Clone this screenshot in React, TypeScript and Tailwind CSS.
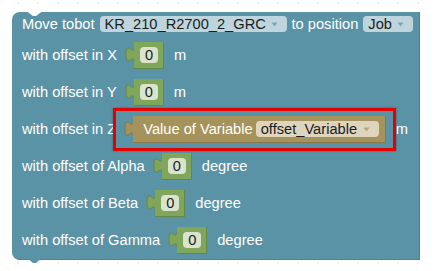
import React from "react";

function Arrow({ color }: { color: string }) {
  return (
    <svg width="7" height="5" viewBox="0 0 7 5" className="shrink-0">
      <path d="M0.5,0.5 L6.5,0.5 L3.5,4.5 Z" fill={color} />
    </svg>
  );
}

function Dropdown({
  label,
  cls,
  arrow,
}: {
  label: string;
  cls: string;
  arrow: string;
}) {
  return (
    <div
      className={`flex h-[16px] shrink-0 items-center justify-between rounded-[4px] pl-[5px] pr-[9px] text-[#1c1c1c] ${cls}`}
    >
      <span className="leading-none whitespace-nowrap">{label}</span>
      <Arrow color={arrow} />
    </div>
  );
}

function Tab({ fill, stroke }: { fill: string; stroke: string }) {
  return (
    <svg
      width="8"
      height="27"
      viewBox="0 0 8 27"
      className="shrink-0 overflow-visible"
    >
      <path
        d="M8.6,5 L8,5 c0,10 -8,-8 -8,7.5 s8,-2.5 8,7.5 L8.6,20 Z"
        fill={fill}
      />
      <path
        d="M8,5 c0,10 -8,-8 -8,7.5 s8,-2.5 8,7.5"
        fill="none"
        stroke={stroke}
        strokeWidth="1"
      />
    </svg>
  );
}

function NumBlock() {
  return (
    <div className="flex items-center">
      <Tab fill="#80a65b" stroke="#66864a" />
      <div className="flex h-[27px] w-[30px] items-center border-b border-r border-[#66864a] bg-[#80a65b] pl-[6px]">
        <div className="flex h-[16px] w-[18px] items-center justify-center rounded-[4px] bg-[#d9e4ce] leading-none text-[#1c1c1c]">
          0
        </div>
      </div>
    </div>
  );
}

function Row({
  label,
  unit,
  children,
}: {
  label: string;
  unit: string;
  children: React.ReactNode;
}) {
  return (
    <div className="flex h-[27px] items-center">
      <span className="whitespace-nowrap leading-none">{label}</span>
      <div className="ml-[9px]">{children}</div>
      <span className="ml-[10px] whitespace-nowrap leading-none">{unit}</span>
    </div>
  );
}

function Grid() {
  const dots: React.ReactNode[] = [];
  for (let i = 0; i < 21; i++) {
    for (let j = 0; j < 14; j++) {
      const x = 18 + i * 20;
      const y = 3 + j * 20;
      dots.push(
        <g key={`${i}-${j}`}>
          <rect x={x - 0.5} y={y - 0.5} width="1" height="1" fill="#c8c8c8" />
        </g>
      );
    }
  }
  return (
    <svg
      className="absolute inset-0"
      width="436"
      height="271"
      viewBox="0 0 436 271"
    >
      {dots}
    </svg>
  );
}

export default function App() {
  return (
    <div className="relative h-[271px] w-[436px] overflow-hidden bg-white font-['Liberation_Sans',Arial,sans-serif] text-[14.67px]">
      <Grid />
      <div className="relative pl-[12px] pt-[12px]">
        <div className="relative flex h-[248px] w-[408px] flex-col gap-[10px] rounded-l-[8px] border-b border-r border-[#4f8193] bg-[#5b93a6] pl-[10px] pt-[4px] text-white">
          {/* top notch */}
          <svg
            className="absolute left-[15px] top-0"
            width="15"
            height="4"
            viewBox="0 0 15 4"
          >
            <path d="M0,-0.5 L6,4 L9,4 L15,-0.5 Z" fill="#ffffff" />
          </svg>
          {/* bottom notch tab */}
          <svg
            className="absolute left-[15px] top-full"
            width="15"
            height="5"
            viewBox="0 0 15 5"
          >
            <path d="M0,-1 L6,4 L9,4 L15,-1 Z" fill="#5b93a6" />
          </svg>

          <div className="flex h-[16px] items-center">
            <span className="whitespace-nowrap leading-none">Move tobot</span>
            <Dropdown
              label="KR_210_R2700_2_GRC"
              cls="ml-[5px] w-[187px] bg-[#bfd5dd]"
              arrow="#7fa8b7"
            />
            <span className="ml-[5px] whitespace-nowrap leading-none">
              to position
            </span>
            <Dropdown
              label="Job"
              cls="ml-[5px] w-[50px] bg-[#bfd5dd]"
              arrow="#7fa8b7"
            />
          </div>

          <Row label="with offset in X" unit="m">
            <NumBlock />
          </Row>
          <Row label="with offset in Y" unit="m">
            <NumBlock />
          </Row>
          <Row label="with offset in Z" unit="m">
            <div className="relative flex items-center">
              <Tab fill="#a6935b" stroke="#87774a" />
              <div className="flex h-[27px] items-center border-b border-r border-[#87774a] bg-[#a6935b] pl-[10px] pr-[6px]">
                <span className="whitespace-nowrap leading-none">
                  Value of Variable
                </span>
                <Dropdown
                  label="offset_Variable"
                  cls="ml-[3px] w-[123px] bg-[#ddd5bd]"
                  arrow="#b9a677"
                />
              </div>
              <span className="pointer-events-none absolute -bottom-[8px] -left-[12px] -right-[10px] -top-[8px] border-[3px] border-[#e50000] shadow-[0_0_2px_rgba(0,0,0,0.35)]" />
            </div>
          </Row>
          <Row label="with offset of Alpha" unit="degree">
            <NumBlock />
          </Row>
          <Row label="with offset of Beta" unit="degree">
            <NumBlock />
          </Row>
          <Row label="with offset of Gamma" unit="degree">
            <NumBlock />
          </Row>
        </div>
      </div>
    </div>
  );
}
